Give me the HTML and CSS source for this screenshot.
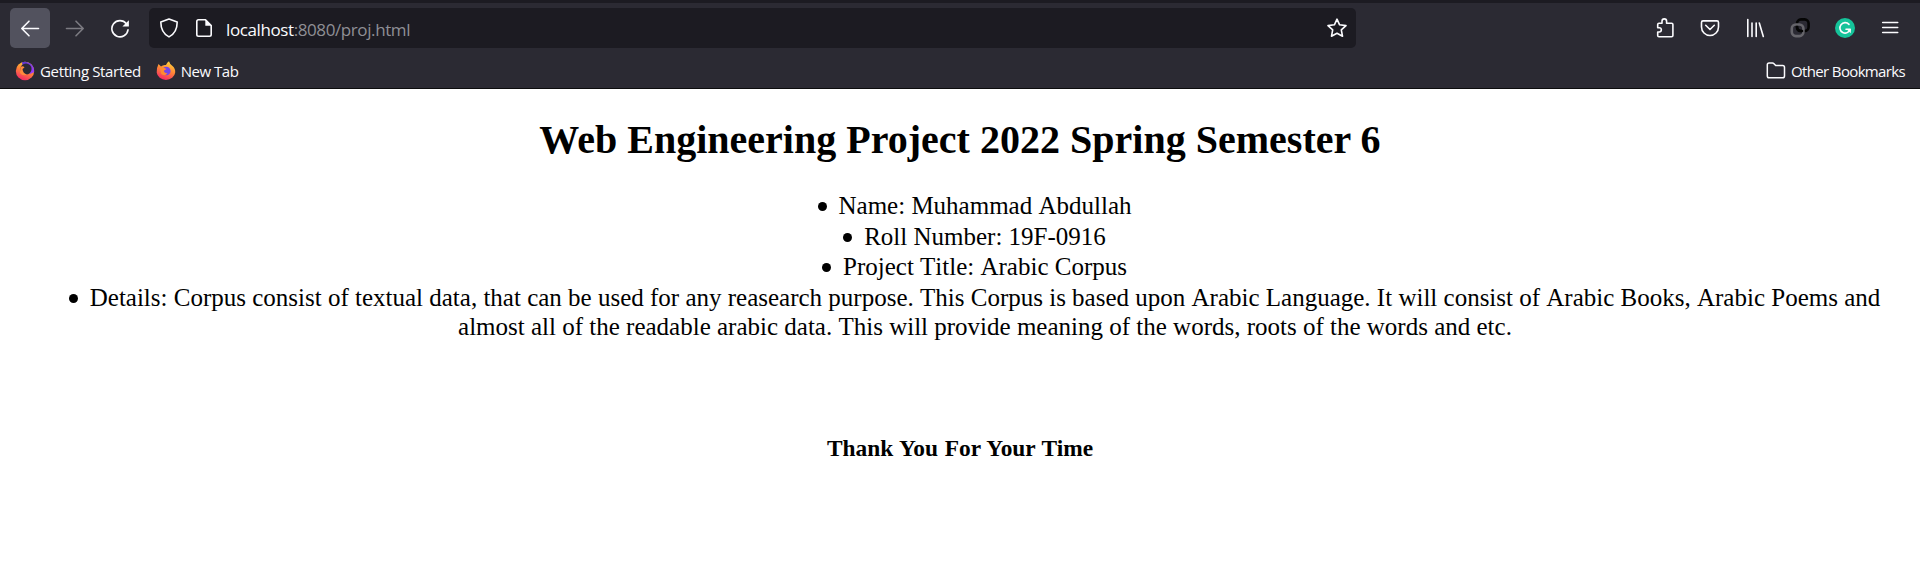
FILE: index.html
```html
<!DOCTYPE html>
<html lang="en">
<head>
<meta charset="utf-8">
<title>Web Engineering Project</title>
<link rel="stylesheet" href="styles.css">
</head>
<body>
<header class="browser">
  <nav class="toolbar">
    <div class="nav-buttons">
      <button class="tool active" aria-label="Back"><svg class="icon" viewBox="0 0 20 20"><path d="M18.5 10.5H2M9 3.2 1.8 10.5 9 17.8"/></svg></button>
      <button class="tool dim" aria-label="Forward"><svg class="icon" viewBox="0 0 20 20"><path d="M1.5 10.5H18M11 3.2l7.2 7.3-7.2 7.3"/></svg></button>
      <button class="tool" aria-label="Reload"><svg class="icon" viewBox="0 0 20 20"><path d="M16.4 5.8A8.1 8.1 0 1 0 18 11.8"/><path class="solid" d="M18.9 2.2v6.3h-6.5z"/></svg></button>
    </div>
    <div class="urlbar">
      <svg class="icon" viewBox="0 0 20 20"><path d="M10 1 18.2 3.9C18.2 10 15.8 15.8 10 18.9 4.200 15.8 1.800 10 1.800 3.900Z"/></svg>
      <svg class="icon page-icon" viewBox="0 0 20 20"><path d="M11.500 1.800H4.500Q2.800 1.800 2.800 3.500v13Q2.800 18.200 4.500 18.200h11Q17.200 18.200 17.200 16.500V7.500Z"/><path class="solid" d="M11.300 1.300v6.500h6.400z"/></svg>
      <span class="url"><span class="host">localhost</span>:8080/proj.html</span>
      <svg class="icon" viewBox="0 0 20 20"><path d="M10 1.200 12.600 6.800 19 7.600 14.300 11.900 15.500 18.200 10 15.200 4.500 18.200 5.700 11.900 1 7.600 7.400 6.800Z"/></svg>
    </div>
    <div class="extensions">
      <button class="tool" aria-label="Extensions"><svg class="icon" viewBox="0 0 20 20"><path d="M2.700 8V6.500Q2.700 5.200 4 5.200H7V3.200a2.300 2.300 0 0 1 4.600 0v2h5Q17.900 5.200 17.900 6.500v11Q17.900 18.700 16.600 18.700H4Q2.700 18.700 2.700 17.400V14H4.200a2.100 2.100 0 0 0 0-4.300H2.700Z"/></svg></button>
      <button class="tool" aria-label="Pocket"><svg class="icon" viewBox="0 0 20 20"><path d="M3 2.900h14Q18.500 2.900 18.500 4.400V9a8.500 8.500 0 0 1-17 0V4.400Q1.500 2.900 3 2.900Z"/><path d="m5.700 7.300 4.300 4.200 4.300-4.200"/></svg></button>
      <button class="tool" aria-label="Library"><svg class="icon" viewBox="0 0 20 20"><path d="M2.800 1.500v17M7 5v13.500M11.200 5v13.500M14.300 5l4 13.500"/></svg></button>
      <button class="tool" aria-label="Link extension"><svg class="icon link" viewBox="0 0 20 20"><rect class="link-back" x="7" y="1.400" width="11.600" height="11.600" rx="4"/><rect class="link-front" x="1.800" y="6.500" width="11.600" height="11.600" rx="4"/><path class="link-back" d="M7 9q0 4 4 4h1"/></svg></button>
      <button class="tool" aria-label="Grammarly"><svg class="icon" viewBox="0 0 20 20"><circle class="green" cx="10" cy="10" r="10"/><path d="M14 6.400A5.200 5.200 0 1 0 15.100 11.300H11"/><path class="solid" d="M11.500 11h4.300v4.200z"/></svg></button>
      <button class="tool" aria-label="Menu"><svg class="icon" viewBox="0 0 20 20"><path d="M2.700 4.500h15M2.700 9.500h15M2.700 14.500h15"/></svg></button>
    </div>
  </nav>
  <nav class="bookmarks">
    <a class="bookmark started"><svg class="favicon" viewBox="0 0 20 20">
      <defs>
        <linearGradient id="flame" x1=".7" y1="0" x2=".3" y2="1"><stop offset="0" stop-color="#ffd43c"/><stop offset=".45" stop-color="#ff8a35"/><stop offset="1" stop-color="#f52467"/></linearGradient>
        <linearGradient id="tail" x1="0" y1="0" x2="1" y2="1"><stop offset="0" stop-color="#5a35c8"/><stop offset="1" stop-color="#a43cff"/></linearGradient>
      </defs>
      <circle cx="10" cy="10" r="9.200" fill="url(#flame)"/><path d="M7 1.200a9.200 9.200 0 0 1 12 10L15 13 7.500 5z" fill="url(#tail)"/><circle cx="11" cy="8" r="5.600" fill="#2b2a33"/><path d="M5.500 6Q8 4.500 9.500 6.500L7.500 8Q8 12.500 12 13.500 8 15.500 5 12z" fill="#ff8a3c"/></svg><span>Getting Started</span></a>
    <a class="bookmark newtab"><svg class="favicon" viewBox="0 0 20 20"><path d="M2.500 3 5 5.500Q7 3.500 10 4 11 1.500 13 .3q.5 2.500 3.500 4.700 3 2.500 2.700 6.500a9.300 8.300 0 0 1-18.500 0Q.4 7 2.500 3Z" fill="url(#flame)"/><circle cx="10.300" cy="10" r="4.300" fill="#7446e8"/><path d="M4 6.500Q7 5.500 10.500 8L7.800 9.800Q8 12 11.500 12.500 8 16 5 12.500z" fill="#ff8a30"/></svg><span>New Tab</span></a>
    <a class="bookmark other"><svg class="favicon" viewBox="0 0 20 20"><path class="folder" d="M1.300 3.800Q1.300 2 3.100 2H6.500Q7.300 2 8 2.700L9.700 4.600H16.700Q18.500 4.600 18.500 6.400V15Q18.500 16.800 16.700 16.800H3.100Q1.300 16.800 1.300 15Z"/></svg><span>Other Bookmarks</span></a>
  </nav>
</header>
<main class="page">
  <h1 class="title">Web Engineering Project 2022 Spring Semester 6</h1>
  <ul class="facts">
    <li class="fact">Name: Muhammad Abdullah</li>
    <li class="fact">Roll Number: 19F-0916</li>
    <li class="fact">Project Title: Arabic Corpus</li>
    <li class="fact">Details: Corpus consist of textual data, that can be used for any reasearch purpose. This Corpus is based upon Arabic Language. It will consist of Arabic Books, Arabic Poems and almost all of the readable arabic data. This will provide meaning of the words, roots of the words and etc.</li>
  </ul>
  <h3 class="thanks">Thank You For Your Time</h3>
</main>
</body>
</html>
```
FILE: styles.css
```css
* { box-sizing: border-box; }

body {
  margin: 0;
  background: #fff;
  color: #000;
  font-family: "Liberation Serif", "Times New Roman", serif;
}

.browser {
  height: 89px;
  border-top: 3px solid #1c1b22;
  border-bottom: 1px solid #0c0c0d;
  background: #2b2a33;
  color: #fbfbfe;
  font-family: "Open Sans", "Noto Sans", sans-serif;
}

.toolbar {
  display: flex;
  height: 50px;
  padding: 5px 10px;
}

.nav-buttons, .extensions { display: flex; gap: 5px; }
.extensions { margin-left: auto; }

.tool {
  display: flex;
  align-items: center;
  justify-content: center;
  width: 40px;
  height: 40px;
  padding: 0;
  border: 0;
  border-radius: 5px;
  background: none;
  color: #fbfbfe;
}
.active { background: #52525e; }
.dim { color: #7c7b82; }

.icon {
  flex: none;
  width: 20px;
  height: 20px;
  fill: none;
  stroke: currentColor;
  stroke-width: 1.6;
  stroke-linecap: round;
  stroke-linejoin: round;
}
.solid { fill: currentColor; stroke: none; }
.green { fill: #15c39a; stroke: none; }
.link { stroke-width: 2.6; }
.link-back { stroke: #050505; }
.link-front { stroke: #66656b; }

.urlbar {
  display: flex;
  align-items: center;
  width: 1207px;
  height: 40px;
  margin-left: 9px;
  padding: 0 9px 0 10px;
  border-radius: 5px;
  background: #1c1b22;
}
.page-icon { margin-left: 15px; }
.url {
  flex: 1;
  margin-left: 12px;
  padding-top: 3px;
  color: #8f8f95;
  font-size: 17px;
  line-height: 24px;
  letter-spacing: -0.4px;
}
.host { color: #fbfbfe; }

.bookmarks {
  display: flex;
  align-items: center;
  height: 35px;
  padding: 0 15px;
  font-size: 15px;
  line-height: 20px;
}
.bookmark { display: flex; align-items: center; gap: 5px; letter-spacing: -0.35px; }
.newtab { margin-left: 15px; letter-spacing: -0.5px; }
.other { margin-left: auto; letter-spacing: -0.65px; }
.favicon { width: 20px; height: 20px; }
.folder { fill: none; stroke: #fbfbfe; stroke-width: 1.5; }

.page { padding: 0 10px; text-align: center; }
.title {
  margin: 28px 0 0;
  font-size: 40px;
  line-height: 46px;
  word-spacing: 0.1px;
}
.facts {
  margin: 26px 0 0;
  padding: 0 0 0 50px;
  font-size: 25px;
  line-height: 29px;
  font-kerning: none;
  list-style: none;
}
.fact { padding-top: 1.8px; }
.fact::before {
  content: "";
  display: inline-block;
  width: 9px;
  height: 9px;
  margin: 0 12px 0 -21px;
  border-radius: 50%;
  background: #000;
  vertical-align: 3px;
}
.thanks {
  margin: 93px 0 0;
  font-size: 23.4px;
  line-height: 28px;
  word-spacing: 0.8px;
}
```
